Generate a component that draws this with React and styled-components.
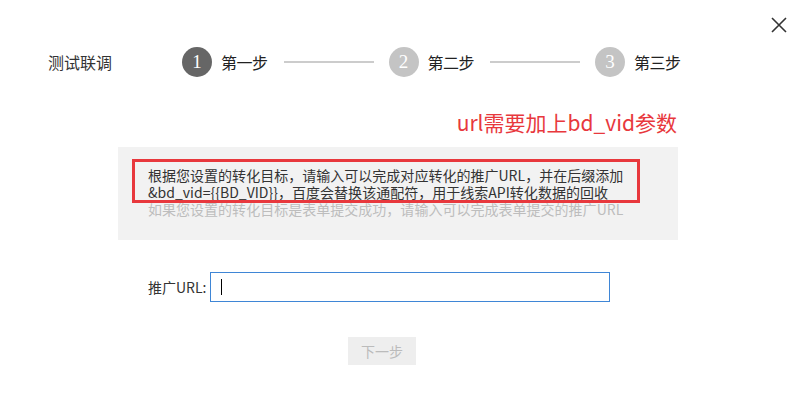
import React from "react"
import styled, { createGlobalStyle } from "styled-components"

const GlobalStyle = createGlobalStyle`
  html, body {
    margin: 0;
    padding: 0;
    background: #fff;
  }
  body {
    font-family: "Noto Sans CJK SC", "Noto Sans", sans-serif;
    color: #333;
  }
`

const steps = [
  { num: 1, label: "第一步", active: true },
  { num: 2, label: "第二步" },
  { num: 3, label: "第三步" },
]

const App = () => {
  return (
    <>
      <GlobalStyle />
      <Dialog>
        <CloseButton aria-label="close">
          <svg width="16" height="16" viewBox="0 0 16 16">
            <path d="M1 1 L15 15 M15 1 L1 15" stroke="#333" strokeWidth="1.6" fill="none" />
          </svg>
        </CloseButton>

        <StepBar>
          <Title>测试联调</Title>
          {steps.map((s, i) => (
            <React.Fragment key={s.num}>
              <Step>
                <Circle active={s.active}>{s.num}</Circle>
                <StepLabel>{s.label}</StepLabel>
              </Step>
              {i < steps.length - 1 && <Line />}
            </React.Fragment>
          ))}
        </StepBar>

        <Content>
          <Note>url需要加上bd_vid参数</Note>
          <TipBox>
            <Highlight />
            <TipLine>根据您设置的转化目标，请输入可以完成对应转化的推广URL，并在后缀添加</TipLine>
            <TipLine>&amp;bd_vid={"{{BD_VID}}"}，百度会替换该通配符，用于线索API转化数据的回收</TipLine>
            <TipLine muted>如果您设置的转化目标是表单提交成功，请输入可以完成表单提交的推广URL</TipLine>
          </TipBox>

          <FormRow>
            <Label>推广URL:</Label>
            <InputWrap>
              <Input />
              <Caret />
            </InputWrap>
          </FormRow>

          <ButtonRow>
            <NextButton disabled>下一步</NextButton>
          </ButtonRow>
        </Content>
      </Dialog>
    </>
  )
}

export default App

const Dialog = styled.div`
  position: relative;
  width: 801px;
  height: 406px;
  box-sizing: border-box;
  padding-top: 47px;
  background: #fff;
`

const CloseButton = styled.button`
  position: absolute;
  top: 16px;
  right: 13px;
  width: 18px;
  height: 18px;
  padding: 0;
  border: none;
  background: none;
  display: flex;
  align-items: center;
  justify-content: center;
  cursor: pointer;
`

const StepBar = styled.div`
  display: flex;
  align-items: center;
  padding-left: 48px;
  height: 30px;
`

const Title = styled.div`
  width: 134px;
  font-size: 16px;
  line-height: 30px;
  color: #333;
`

const Step = styled.div`
  display: flex;
  align-items: center;
  gap: 9px;
`

const Circle = styled.div`
  width: 30px;
  height: 30px;
  border-radius: 50%;
  background: ${(p) => (p.active ? "#666" : "#c4c4c4")};
  color: #fff;
  font-family: "Liberation Serif", "DejaVu Serif", serif;
  font-size: 19px;
  line-height: 30px;
  text-align: center;
`

const StepLabel = styled.div`
  font-size: 16px;
  line-height: 30px;
  color: #222;
  letter-spacing: -0.5px;
`

const Line = styled.div`
  width: 90px;
  height: 2px;
  background: #ccc;
  margin: 0 15px 0 16px;
`

const Content = styled.div`
  width: 560px;
  margin-left: 118px;
  margin-top: 31px;
`

const Note = styled.div`
  text-align: right;
  font-size: 21px;
  line-height: 28px;
  color: #e8383d;
  padding-right: 1px;
  margin-bottom: 11px;
`

const TipBox = styled.div`
  position: relative;
  background: #f2f2f2;
  padding: 20px 0 20px 30px;
  height: 93px;
  box-sizing: border-box;
`

const Highlight = styled.div`
  position: absolute;
  left: 14px;
  top: 12px;
  width: 508px;
  height: 44px;
  box-sizing: border-box;
  border: 3px solid #e8383d;
`

const TipLine = styled.div`
  font-size: 14px;
  line-height: 17px;
  letter-spacing: 0.02px;
  white-space: nowrap;
  color: ${(p) => (p.muted ? "#bdbdbd" : "#333")};
`

const FormRow = styled.div`
  display: flex;
  align-items: center;
  margin-top: 32px;
  padding-left: 30px;
`

const Label = styled.label`
  width: 62px;
  font-size: 14px;
  line-height: 30px;
  color: #333;
`

const InputWrap = styled.div`
  position: relative;
  width: 400px;
  height: 30px;
`

const Input = styled.input`
  width: 100%;
  height: 100%;
  box-sizing: border-box;
  border: 1px solid #3f86d6;
  outline: none;
  padding: 0 10px;
  font-size: 14px;
  font-family: inherit;
`

const Caret = styled.span`
  position: absolute;
  left: 11px;
  top: 7px;
  width: 1px;
  height: 16px;
  background: #000;
`

const ButtonRow = styled.div`
  display: flex;
  margin-top: 35px;
  padding-left: 230px;
`

const NextButton = styled.button`
  width: 68px;
  height: 28px;
  border: none;
  background: #eee;
  color: #bbb;
  font-family: inherit;
  font-size: 14px;
  padding: 0;
`
